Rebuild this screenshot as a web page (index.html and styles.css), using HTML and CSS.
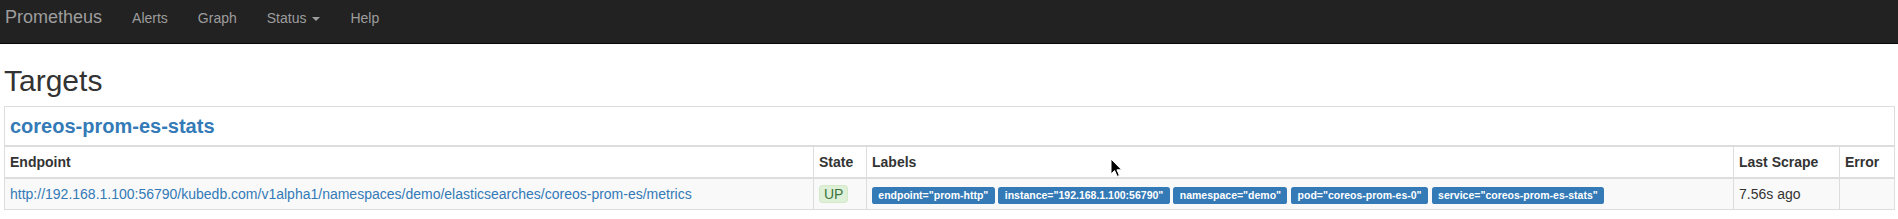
FILE: index.html
```html
<!DOCTYPE html>
<html lang="en">
<head>
<meta charset="utf-8">
<title>Prometheus Time Series Collection and Processing Server</title>
<link rel="stylesheet" href="styles.css">
</head>
<body>
<nav class="navbar">
  <a class="brand" href="#">Prometheus</a>
  <ul class="nav">
    <li><a href="#">Alerts</a></li>
    <li><a href="#">Graph</a></li>
    <li><a href="#">Status <span class="caret"></span></a></li>
    <li><a href="#">Help</a></li>
  </ul>
</nav>
<div class="container">
  <h2 class="page-title">Targets</h2>
  <table class="targets">
    <colgroup>
      <col class="col-endpoint">
      <col class="col-state">
      <col class="col-labels">
      <col class="col-scrape">
      <col class="col-error">
    </colgroup>
    <thead>
      <tr class="job-header">
        <th colspan="5"><a href="#job-coreos-prom-es-stats">coreos-prom-es-stats</a></th>
      </tr>
      <tr class="col-header">
        <th>Endpoint</th>
        <th>State</th>
        <th>Labels</th>
        <th>Last Scrape</th>
        <th>Error</th>
      </tr>
    </thead>
    <tbody>
      <tr class="striped">
        <td><a href="#">http://192.168.1.100:56790/kubedb.com/v1alpha1/namespaces/demo/elasticsearches/coreos-prom-es/metrics</a></td>
        <td><span class="state-up">UP</span></td>
        <td class="labels"><span class="label">endpoint="prom-http"</span> <span class="label">instance="192.168.1.100:56790"</span> <span class="label">namespace="demo"</span> <span class="label">pod="coreos-prom-es-0"</span> <span class="label">service="coreos-prom-es-stats"</span></td>
        <td>7.56s ago</td>
        <td></td>
      </tr>
    </tbody>
  </table>
</div>
<svg class="cursor" width="13" height="20" viewBox="0 0 13 20" aria-hidden="true">
  <path d="M1 1 L1 16 L4.6 12.6 L7.2 18.4 L9.4 17.4 L6.9 11.8 L11.6 11.8 Z" fill="#000" stroke="#fff" stroke-width="1" stroke-linejoin="round"/>
</svg>
</body>
</html>
```
FILE: styles.css
```css
* {
  box-sizing: border-box;
}

html, body {
  margin: 0;
  padding: 0;
  background: #fff;
}

body {
  font-family: "Liberation Sans", Arial, Helvetica, sans-serif;
  font-size: 14px;
  line-height: 20px;
  color: #333;
  position: relative;
}

a {
  color: #337ab7;
  text-decoration: none;
}

/* Navbar */
.navbar {
  display: flex;
  align-items: flex-start;
  height: 44px;
  background: #222;
  border-bottom: 1px solid #080808;
}

.brand {
  display: block;
  padding: 7px 15px 0 5px;
  font-size: 18px;
  line-height: 20px;
  color: #9d9d9d;
}

.nav {
  display: flex;
  margin: 0;
  padding: 0;
  list-style: none;
}

.nav a {
  display: block;
  padding: 8px 15px 0;
  line-height: 20px;
  color: #9d9d9d;
}

.caret {
  display: inline-block;
  width: 0;
  height: 0;
  margin-left: 2px;
  vertical-align: middle;
  border-top: 4px solid;
  border-left: 4px solid transparent;
  border-right: 4px solid transparent;
}

/* Content */
.container {
  padding: 0 4px;
}

.page-title {
  margin: 20px 0 9px;
  font-size: 30px;
  line-height: 33px;
  font-weight: 500;
  color: #333;
}

.targets {
  width: 100%;
  table-layout: fixed;
  border-collapse: collapse;
  border: 1px solid #ddd;
}

.col-endpoint { width: 809px; }
.col-state { width: 53px; }
.col-labels { width: 867px; }
.col-scrape { width: 106px; }
.col-error { width: 55px; }

.targets th,
.targets td {
  padding: 5px;
  border: 1px solid #ddd;
  text-align: left;
  vertical-align: top;
  line-height: 20px;
  white-space: nowrap;
  overflow: hidden;
}

.targets thead th {
  border-bottom-width: 2px;
  font-weight: bold;
}

.job-header th {
  font-size: 20px;
  line-height: 28px;
}

.job-header a {
  font-weight: bold;
}

.striped td {
  background: #f9f9f9;
}

.labels {
  padding-left: 4px;
}

.state-up {
  padding: 0 4px;
  color: #3c763d;
  background: #dff0d8;
  border: 1px solid #d6e9c6;
  border-radius: 4px;
}

.label {
  display: inline;
  padding: 0.2em 0.6em 0.3em;
  font-size: 75%;
  font-weight: bold;
  line-height: 1;
  color: #fff;
  background: #337ab7;
  border-radius: 0.25em;
  white-space: nowrap;
  vertical-align: baseline;
}

.cursor {
  position: absolute;
  left: 1110px;
  top: 158px;
}
```
